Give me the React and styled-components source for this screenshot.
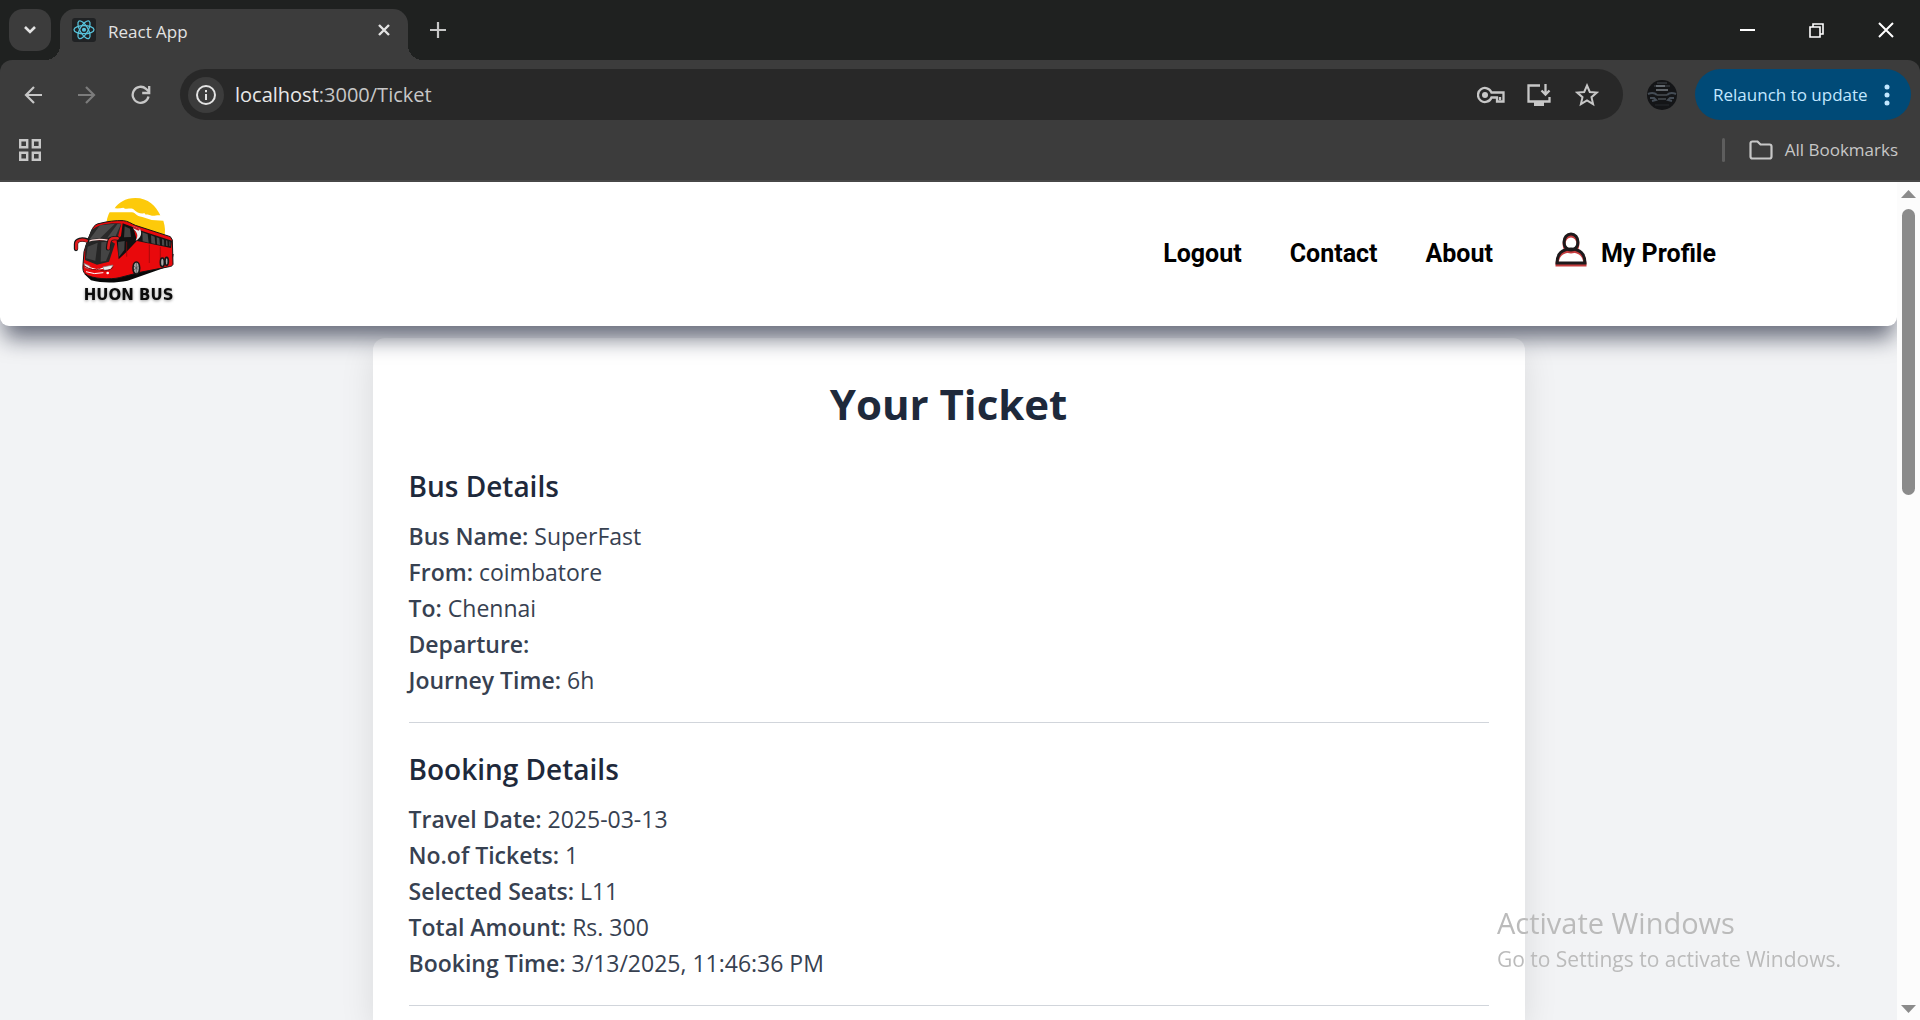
import React from "react";
import styled, { createGlobalStyle } from "styled-components";

const GlobalStyle = createGlobalStyle`
  *, *::before, *::after { box-sizing: border-box; }
  body { margin: 0; background: #f2f3f5; font-family: "Open Sans", "Noto Sans", sans-serif; }
  h1, h2, p { margin: 0; }
  button, input { font: inherit; color: inherit; }
  a { color: inherit; text-decoration: none; }
`;

const Window = styled.div`
  display: flex;
  flex-direction: column;
  height: 100vh;
  overflow: hidden;
`;

const TabStrip = styled.div`
  display: flex;
  align-items: flex-start;
  height: 60px;
  padding: 9px 0 0 9px;
  background: #1f2120;
`;

const IconButton = styled.button`
  display: flex;
  align-items: center;
  justify-content: center;
  flex: none;
  width: ${(p) => p.$width || 42}px;
  height: ${(p) => p.$height || 42}px;
  padding: 0;
  border: 0;
  border-radius: ${(p) => p.$radius || 0}px;
  background: ${(p) => p.$background || "transparent"};
  color: ${(p) => p.$color || "#c7c7c7"};
`;

const Tab = styled.div`
  position: relative;
  display: flex;
  align-items: center;
  width: 348px;
  height: 51px;
  margin-left: 9px;
  padding: 0 9px 9px 12px;
  gap: 12px;
  border-radius: 15px 15px 0 0;
  background: #3c3c3c;
  color: #e3e3e3;
  font-size: 17px;
  line-height: 24px;

  &::before, &::after {
    content: "";
    position: absolute;
    bottom: 0;
    width: 15px;
    height: 15px;
  }
  &::before {
    right: 100%;
    background: radial-gradient(circle at 0 0, transparent 15px, #3c3c3c 15px);
  }
  &::after {
    left: 100%;
    background: radial-gradient(circle at 100% 0, transparent 15px, #3c3c3c 15px);
  }
`;

const TabTitle = styled.span`
  flex: 1;
  padding-top: 3px;
`;

const WindowControls = styled.div`
  display: flex;
  margin-left: auto;
`;

const ToolbarBack = styled.div`
  background: #1f2120;
`;

const Toolbar = styled.div`
  display: flex;
  align-items: center;
  height: 69px;
  padding: 0 9px 0 6px;
  border-radius: 12px 12px 0 0;
  background: #3c3c3c;
`;

const Omnibox = styled.div`
  display: flex;
  flex: 1;
  align-items: center;
  height: 51px;
  margin: 0 18px 0 12px;
  padding: 0 12px 0 8px;
  border-radius: 26px;
  background: #282828;
`;

const Address = styled.label`
  position: relative;
  display: flex;
  flex: 1;
  align-items: center;
  margin-left: 11px;
  font-size: 20px;
  line-height: 28px;
  color: #c7c7c7;
`;

const Host = styled.span`
  color: #e8e8e8;
`;

const AddressInput = styled.input`
  position: absolute;
  inset: 0;
  width: 100%;
  border: 0;
  padding: 0;
  outline: 0;
  background: transparent;
`;

const RelaunchButton = styled.button`
  display: flex;
  align-items: center;
  justify-content: space-between;
  width: 216px;
  height: 51px;
  margin-left: 12px;
  padding: 0 21px 0 18px;
  border: 0;
  border-radius: 26px;
  background: #004a77;
  color: #c2e7ff;
  font-size: 17px;
  line-height: 24px;
  white-space: nowrap;
`;

const BookmarksBar = styled.div`
  display: flex;
  align-items: center;
  height: 53px;
  padding: 0 22px 9px 9px;
  border-bottom: 2px solid #474747;
  background: #3c3c3c;
  color: #c7c7c7;
`;

const BookmarksDivider = styled.span`
  width: 3px;
  height: 24px;
  margin-left: auto;
  border-radius: 2px;
  background: #5e5e5e;
`;

const AllBookmarks = styled.button`
  display: flex;
  align-items: center;
  gap: 12px;
  margin-left: 24px;
  padding: 0;
  border: 0;
  background: transparent;
  font-size: 17px;
  line-height: 24px;
`;

const Viewport = styled.div`
  display: flex;
  flex: 1;
  min-height: 0;
`;

const Page = styled.div`
  display: flex;
  flex: 1;
  flex-direction: column;
  overflow: hidden;
  background: #f2f3f5;
`;

const SiteHeader = styled.header`
  position: relative;
  z-index: 1;
  display: flex;
  flex: none;
  align-items: center;
  justify-content: space-between;
  height: 144px;
  padding: 0 181px 6px 50px;
  border-radius: 0 0 9px 9px;
  background: #fff;
  box-shadow: 0 16px 22px -4px rgba(10, 16, 40, 0.6);
`;

const Nav = styled.nav`
  display: flex;
  align-items: center;
  gap: 48px;
  padding-top: 6px;
  color: #000;
  font-family: Roboto, "Liberation Sans", sans-serif;
  font-size: 25px;
  font-weight: 700;
  line-height: 32px;
`;

const ProfileLink = styled.a`
  display: flex;
  align-items: center;
  gap: 14px;
  margin-left: 14px;
`;

const Card = styled.main`
  flex: 1 0 auto;
  width: 100%;
  max-width: 1152px;
  margin: 12px auto 0;
  padding: 36px 36px 0;
  border-radius: 12px 12px 0 0;
  background: #fff;
  box-shadow: 0 11px 34px rgba(0, 0, 0, 0.1);
`;

const Title = styled.h1`
  margin-bottom: 32px;
  color: #1e293b;
  font-size: 42px;
  font-weight: 700;
  line-height: 60px;
  text-align: center;
`;

const Section = styled.section`
  padding-bottom: 24px;
  border-bottom: 1px solid #d1d5db;

  & + & {
    margin-top: 26px;
  }
`;

const SectionTitle = styled.h2`
  margin-bottom: 12px;
  color: #1e293b;
  font-size: 28px;
  font-weight: 600;
  line-height: 40px;
`;

const Detail = styled.p`
  color: #374151;
  font-size: 23px;
  line-height: 36px;
`;

const Label = styled.strong`
  font-weight: 600;
`;

const Scrollbar = styled.div`
  display: flex;
  flex: none;
  flex-direction: column;
  align-items: center;
  justify-content: space-between;
  width: 23px;
  padding: 8px 0 7px;
  background: #fcfcfc;
`;

const Track = styled.div`
  flex: 1;
  width: 13px;
  padding: 11px 0 2px;
`;

const Thumb = styled.div`
  height: 36%;
  border-radius: 7px;
  background: #8b8b8b;
`;

const Watermark = styled.aside`
  position: fixed;
  right: 79px;
  bottom: 46px;
  z-index: 2;
  color: #bbbbbb;
  pointer-events: none;
`;

const WatermarkTitle = styled.p`
  font-size: 29px;
  line-height: 42px;
`;

const WatermarkText = styled.p`
  font-size: 21px;
  line-height: 30px;
`;

const Icon = ({ w = 24, h = w, sw = 2, children }) => (
  <svg width={w} height={h} viewBox={`0 0 ${w} ${h}`} fill="none" stroke="currentColor" strokeWidth={sw} aria-hidden="true">
    {children}
  </svg>
);

const ReactMark = () => (
  <Icon w={24} sw={1.3}>
    <rect width="24" height="24" rx="3" fill="#202224" stroke="none" />
    <g stroke="#58c4dc" transform="translate(12 11.7)">
      <ellipse rx="10" ry="4" />
      <ellipse rx="10" ry="4" transform="rotate(60)" />
      <ellipse rx="10" ry="4" transform="rotate(120)" />
      <circle r="1.4" fill="#58c4dc" />
    </g>
  </Icon>
);

const Avatar = () => (
  <Icon w={30} sw={1.4}>
    <circle cx="15" cy="15" r="15" fill="#141517" stroke="none" />
    <path d="M10 3h10M7 6h16" stroke="#33373c" />
    <path d="M9 6h9M9 10h12" stroke="#777d84" />
    <path d="M1 14c5-2 7-1 9 1M29 14c-5-2-7-1-9 1M3 18h4l2 2-4 1M27 18h-4l-2 2 4 1" stroke="#444c55" strokeWidth="2" />
    <path d="M10 15h10M11 19h8" stroke="#484d53" />
    <path d="M8 25h14" stroke="#222427" />
  </Icon>
);

const BusLogo = () => (
  <svg width="150" height="130" viewBox="0 0 450 390" role="img" aria-label="Huon Bus">
    <path d="M194 67c10-16 32-31 62-31 39 0 62 24 75 52-15-1-18 4-30 0-8-3-14 1-17-6-15 2-24-4-32-11-9-8-22 2-32-6-9 2-17 3-26 2Z" fill="#fdca0a" />
    <path d="M179 79h67c12 1 11 12 31 14l28 9 35 2c6 18 6 34 3 50L250 126l-80-20c2-11 5-20 9-27Z" fill="#fdca0a" />
    <path d="M103 264l20 19c35 9 75 8 110 1l132-46 6-34-80 10-150 42Z" fill="#080808" />
    <path d="M128 127c5-9 12-14 22-15 24-6 45-9 70-8 14 1 24 9 36 14l105 34 6 10 2 73c-2 5-5 6-11 7l-88 17-62 16c-24 6-82 5-102-11-7-6-8-14-7-27l3-40 12-38Z" fill="#e9090c" stroke="#141414" strokeWidth="3" />
    <path d="M131 128c15-12 50-19 83-15l-11 42-86 13-5-3 12-34Z" fill="#292929" />
    <path d="M150 118l45-5-44 43-32 4ZM203 113l10 1-17 38-24 3Z" fill="#4b4b4b" />
    <path d="M106 180l10-15 62-4 17 12-18 54-36 9-36-14Z" fill="#252525" />
    <path d="M113 182l30-12-7 54-28-7ZM154 169l18-2 8 28-12 30-16 2Z" fill="#444" />
    <path d="M106 168q33-13 69-5" fill="none" stroke="#f8d6d3" strokeWidth="4" />
    <path d="M218 112l32 12 11 40-32 34-23 22-6-56 13-14Z" fill="#111" />
    <path d="M224 121l16 7 3 25-21 1ZM204 168l20-3-1 27-17 22Z" fill="#414141" />
    <path d="M249 126c10 15 19 22 12 39l102 21 3-22Z" fill="#151515" />
    <path d="M277 139l16 6 3 25-18-4ZM303 148l11 4 2 22-12-2ZM320 154l8 3 2 20-9-2ZM336 159l6 2 1 18-7-1ZM348 163l4 1 1 16-5-1ZM358 166l3 1v14h-3Z" fill="#4a4a4a" />
    <path d="M248 119l22 10c8 15 1 28-13 35 9-15 5-23-6-34Z" fill="#eee" />
    <path d="M248 119l22 10-4 5-17-7Z" fill="#c51b27" />
    <path d="M230 167v45M298 176v55M331 183v38" stroke="#8d090b" strokeWidth="2" />
    <path d="M78 189v-15c0-14 18-16 34-11M203 157c-26-4-27 8-29 30" fill="none" stroke="#161616" strokeWidth="13" strokeLinecap="round" />
    <path d="M79 188v-14c0-13 18-14 31-10M203 157c-26-4-26 8-28 30" fill="none" stroke="#df1b1d" strokeWidth="8" strokeLinecap="round" />
    <path d="M102 232l17 8 3 10-16-5ZM158 243l31-6-6 13-20 3Z" fill="#ececec" stroke="#777" strokeWidth="2" />
    <path d="M119 245q20 10 41 2M108 257q24 10 52 3" fill="none" stroke="#fff" strokeWidth="3" />
    <path d="M103 240q25 17 48 8M151 253q25 6 39-10" fill="none" stroke="#8b0507" strokeWidth="3" />
    <circle cx="173" cy="261" r="4" fill="#fff" />
    <g fill="#aaa" stroke="#171717" strokeWidth="5">
      <ellipse cx="259" cy="246" rx="10" ry="18" />
      <ellipse cx="337" cy="229" rx="6" ry="13" />
      <ellipse cx="350" cy="226" rx="5" ry="12" />
    </g>
    <path d="M259 231v30M252 240l14 12M266 240l-14 12" stroke="#444" strokeWidth="2" />
    <text x="236" y="341" textAnchor="middle" fontFamily="DejaVu Sans, sans-serif" fontSize="45" fontWeight="700" fill="#0b0b0b" style={{ filter: "drop-shadow(0 3px 4px #999)" }}>HUON BUS</text>
  </svg>
);

const ProfileIcon = () => (
  <svg width="32" height="44" viewBox="0 0 32 44" fill="none" strokeWidth="3" aria-hidden="true">
    <g stroke="#c43c3e">
      <ellipse cx="16" cy="12" rx="7" ry="8" />
      <path d="M2 33c0-9 5-14 14-14s14 5 14 14Z" />
    </g>
    <g stroke="#1d1a1c">
      <ellipse cx="16" cy="10" rx="7" ry="8" />
      <path d="M2 31c0-9 5-14 14-14s14 5 14 14Z" />
    </g>
  </svg>
);

const busDetails = [
  ["Bus Name:", "SuperFast"],
  ["From:", "coimbatore"],
  ["To:", "Chennai"],
  ["Departure:", ""],
  ["Journey Time:", "6h"],
];

const bookingDetails = [
  ["Travel Date:", "2025-03-13"],
  ["No.of Tickets:", "1"],
  ["Selected Seats:", "L11"],
  ["Total Amount:", "Rs. 300"],
  ["Booking Time:", "3/13/2025, 11:46:36 PM"],
];

const DetailSection = ({ title, items }) => (
  <Section>
    <SectionTitle>{title}</SectionTitle>
    {items.map(([label, value]) => (
      <Detail key={label}>
        <Label>{label}</Label> {value}
      </Detail>
    ))}
  </Section>
);

const BrowserChrome = () => (
  <>
    <TabStrip>
      <IconButton aria-label="Search tabs" $radius={14} $background="#3c3c3c" $color="#e3e3e3">
        <Icon w={14} h={10} sw={2.6}><path d="M2 2l5 5 5-5" /></Icon>
      </IconButton>
      <Tab>
        <ReactMark />
        <TabTitle>React App</TabTitle>
        <IconButton aria-label="Close tab" $width={30} $height={30} $color="#e3e3e3">
          <Icon w={14} sw={2.4}><path d="M2 2l10 10M12 2L2 12" /></Icon>
        </IconButton>
      </Tab>
      <IconButton aria-label="New tab" $width={60}>
        <Icon w={16} sw={2.2}><path d="M8 0v16M0 8h16" /></Icon>
      </IconButton>
      <WindowControls>
        <IconButton aria-label="Minimize" $width={69} $color="#fff">
          <Icon w={15}><path d="M0 7h15" /></Icon>
        </IconButton>
        <IconButton aria-label="Restore" $width={69} $color="#fff">
          <Icon w={15} sw={1.6}><path d="M1 4h10v10H1ZM4 4V1h10v10h-3" /></Icon>
        </IconButton>
        <IconButton aria-label="Close" $width={69} $color="#fff">
          <Icon w={16}><path d="M1 1l14 14M15 1L1 15" /></Icon>
        </IconButton>
      </WindowControls>
    </TabStrip>
    <ToolbarBack>
      <Toolbar>
        <IconButton aria-label="Back" $width={54}>
          <Icon w={18} sw={2.2}><path d="M18 9H2M10 1L2 9l8 8" /></Icon>
        </IconButton>
        <IconButton aria-label="Forward" $width={54} $color="#7c7c7c">
          <Icon w={18} sw={2.2}><path d="M0 9h16M8 1l8 8-8 8" /></Icon>
        </IconButton>
        <IconButton aria-label="Reload" $width={54}>
          <Icon w={20} sw={2.3}><path d="M17.500 11.500A8 8 0 1 1 15 3.800L18 6.500M18.200 1v7h-7" /></Icon>
        </IconButton>
        <Omnibox>
          <IconButton aria-label="Site information" $width={36} $height={36} $radius={18} $background="#3c3c3c" $color="#e3e3e3">
            <Icon w={22} sw={2}><circle cx="11" cy="11" r="9" /><path d="M11 10v6M11 6v2.200" /></Icon>
          </IconButton>
          <Address>
            <Host>localhost</Host>:3000/Ticket
            <AddressInput aria-label="Address and search bar" />
          </Address>
          <IconButton aria-label="Passwords" $width={48}>
            <Icon w={28} h={18} sw={2.3}>
              <path d="M14.500 6.500A7 7 0 1 0 14.500 11.500H20V15.500H26.500V6.500Z" />
              <circle cx="8" cy="9" r="3" fill="currentColor" stroke="none" />
              <path d="M23 14v-3" />
            </Icon>
          </IconButton>
          <IconButton aria-label="Install app" $width={48}>
            <Icon w={24} h={22} sw={2.3}>
              <path d="M13 1.500H1.500V17.500H22.500V13" />
              <path d="M18.500 0v10M14.500 6.500l4 4 4-4" />
              <path d="M7 17.500h10V22H7Z" fill="currentColor" stroke="none" />
            </Icon>
          </IconButton>
          <IconButton aria-label="Bookmark this tab" $width={48}>
            <Icon w={24} sw={2}><path d="M12 2.500l2.800 6.500 7 .600-5.300 4.600 1.600 6.900L12 17.400l-6.100 3.700 1.600-6.900-5.300-4.600 7-.600Z" /></Icon>
          </IconButton>
        </Omnibox>
        <IconButton aria-label="Profile" $radius={21}><Avatar /></IconButton>
        <RelaunchButton>
          Relaunch to update
          <Icon w={6} h={24}>
            <g fill="currentColor" stroke="none"><circle cx="3" cy="4" r="2.500" /><circle cx="3" cy="12" r="2.500" /><circle cx="3" cy="20" r="2.500" /></g>
          </Icon>
        </RelaunchButton>
      </Toolbar>
    </ToolbarBack>
    <BookmarksBar>
      <IconButton aria-label="Apps">
        <Icon w={22} sw={2.4}><path d="M1.200 1.200h7v7h-7ZM13.800 1.200h7v7h-7ZM1.200 13.800h7v7h-7ZM13.800 13.800h7v7h-7Z" /></Icon>
      </IconButton>
      <BookmarksDivider />
      <AllBookmarks>
        <Icon w={24} h={20} sw={2.200}><path d="M1.500 3.500q0-2 2-2h5l3 3h9q2 0 2 2v10q0 2-2 2h-17q-2 0-2-2Z" /></Icon>
        All Bookmarks
      </AllBookmarks>
    </BookmarksBar>
  </>
);

export default function App() {
  return (
    <>
      <GlobalStyle />
      <Window>
        <BrowserChrome />
        <Viewport>
          <Page>
            <SiteHeader>
              <BusLogo />
              <Nav>
                <a href="#logout">Logout</a>
                <a href="#contact">Contact</a>
                <a href="#about">About</a>
                <ProfileLink href="#profile"><ProfileIcon />My Profile</ProfileLink>
              </Nav>
            </SiteHeader>
            <Card>
              <Title>Your Ticket</Title>
              <DetailSection title="Bus Details" items={busDetails} />
              <DetailSection title="Booking Details" items={bookingDetails} />
            </Card>
          </Page>
          <Scrollbar>
            <Icon w={15} h={8}><path d="M0 8l7.500-8L15 8Z" fill="#8b8b8b" stroke="none" /></Icon>
            <Track><Thumb /></Track>
            <Icon w={15} h={8}><path d="M0 0l7.500 8L15 0Z" fill="#8b8b8b" stroke="none" /></Icon>
          </Scrollbar>
        </Viewport>
        <Watermark>
          <WatermarkTitle>Activate Windows</WatermarkTitle>
          <WatermarkText>Go to Settings to activate Windows.</WatermarkText>
        </Watermark>
      </Window>
    </>
  );
}
